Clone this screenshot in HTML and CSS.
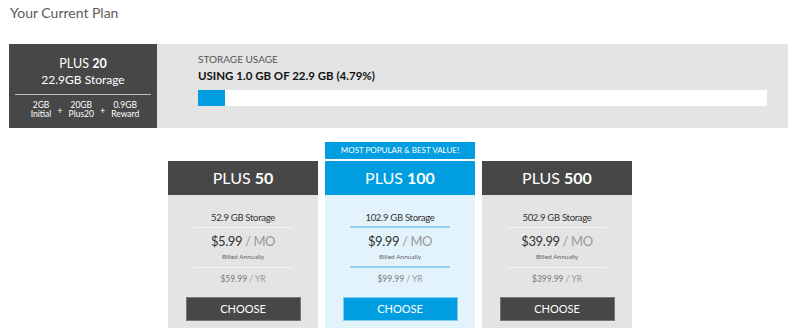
FILE: index.html
```html
<!DOCTYPE html>
<html>

	<head>
		<meta charset="UTF-8">
		<title>Your Current Plan</title>
		<link rel="stylesheet" href="styles.css">
	</head>

	<body>
		<h1 class="title">Your Current Plan</h1>

		<div class="current">
			<div class="current-plan">
				<div class="current-name">PLUS <b>20</b></div>
				<div class="current-size">22.9GB Storage</div>
				<div class="parts">
					<div class="part">2GB<br>Initial</div>
					<span class="plus">+</span>
					<div class="part">20GB<br>Plus20</div>
					<span class="plus">+</span>
					<div class="part">0.9GB<br>Reward</div>
				</div>
			</div>
			<div class="usage">
				<div class="usage-label">STORAGE USAGE</div>
				<div class="usage-text">USING 1.0 GB OF 22.9 GB (4.79%)</div>
				<div class="usage-bar"><div class="usage-fill" style="width: 4.79%"></div></div>
			</div>
		</div>

		<div class="plans">
			<div class="plan">
				<div class="plan-head">PLUS <b>50</b></div>
				<div class="plan-body">
					<div class="plan-size">52.9 GB Storage</div>
					<div class="plan-price">$5.99 <span>/ MO</span></div>
					<div class="plan-billed">Billed Annually</div>
					<div class="plan-year">$59.99 <span>/ YR</span></div>
					<a href="##" class="choose">CHOOSE</a>
				</div>
			</div>
			<div class="plan best">
				<div class="badge">MOST POPULAR &amp; BEST VALUE!</div>
				<div class="plan-head">PLUS <b>100</b></div>
				<div class="plan-body">
					<div class="plan-size">102.9 GB Storage</div>
					<div class="plan-price">$9.99 <span>/ MO</span></div>
					<div class="plan-billed">Billed Annually</div>
					<div class="plan-year">$99.99 <span>/ YR</span></div>
					<a href="##" class="choose">CHOOSE</a>
				</div>
			</div>
			<div class="plan">
				<div class="plan-head">PLUS <b>500</b></div>
				<div class="plan-body">
					<div class="plan-size">502.9 GB Storage</div>
					<div class="plan-price">$39.99 <span>/ MO</span></div>
					<div class="plan-billed">Billed Annually</div>
					<div class="plan-year">$399.99 <span>/ YR</span></div>
					<a href="##" class="choose">CHOOSE</a>
				</div>
			</div>
		</div>
	</body>

</html>
```

FILE: styles.css
```css
* {
	margin: 0;
	padding: 0;
	box-sizing: border-box;
}

body {
	font-family: Lato, "Open Sans", sans-serif;
	background: #fff;
	color: #333;
	width: 800px;
}

.title {
	font-size: 14px;
	font-weight: normal;
	color: #5e5a58;
	line-height: 20px;
	padding: 3px 0 0 10px;
}

/* current plan strip */
.current {
	display: flex;
	width: 779px;
	height: 84px;
	margin: 21px 0 0 9px;
	background: #e4e4e4;
}

.current-plan {
	width: 148px;
	background: #474747;
	color: #fff;
	text-align: center;
	padding-top: 12px;
}

.current-name {
	font-size: 12.5px;
	line-height: 16px;
}

.current-size {
	font-size: 12px;
	line-height: 16px;
	padding-bottom: 6px;
	margin: 0 6px;
	border-bottom: 1px solid #bbb;
}

.parts {
	display: flex;
	justify-content: center;
	align-items: center;
	gap: 6px;
	margin-top: 6px;
	padding-left: 4px;
	font-size: 8.5px;
	line-height: 9px;
}

.plus {
	font-size: 9px;
}

.usage {
	flex: 1;
	padding: 8px 21px 0 41px;
}

.usage-label {
	font-size: 10px;
	line-height: 14px;
	color: #555;
}

.usage-text {
	font-size: 11.5px;
	font-weight: bold;
	line-height: 14px;
	margin-top: 3px;
	color: #111;
}

.usage-bar {
	height: 16px;
	margin-top: 7px;
	background: #fff;
}

.usage-fill {
	height: 100%;
	background: #009ee0;
}

/* plan cards */
.plans {
	display: flex;
	justify-content: center;
	align-items: flex-end;
	gap: 7px;
	margin-top: 14px;
}

.plan {
	width: 150px;
	text-align: center;
}

.badge {
	height: 17px;
	line-height: 17px;
	margin-bottom: 2px;
	font-size: 8px;
	color: #fff;
	background: #009ee0;
}

.plan-head {
	height: 34px;
	line-height: 34px;
	font-size: 16px;
	color: #fff;
	background: #474747;
}

.plan-body {
	padding: 16px 0 8px;
	background: #e4e4e4;
}

.plan-size {
	width: 100px;
	height: 17px;
	margin: 0 auto;
	padding-bottom: 2px;
	font-size: 9.5px;
	line-height: 14px;
	letter-spacing: -0.3px;
	border-bottom: 1px solid #f2f2f2;
}

.plan-price {
	height: 18px;
	margin-top: 4px;
	font-size: 13px;
	line-height: 18px;
	letter-spacing: -0.4px;
	color: #333;
}

.plan-price span,
.plan-year span {
	color: #999;
}

.plan-billed {
	width: 100px;
	height: 16px;
	margin: 2px auto 0;
	padding-bottom: 5px;
	font-size: 6.5px;
	line-height: 10px;
	color: #666;
	border-bottom: 1px solid #f2f2f2;
}

.plan-year {
	height: 12px;
	margin-top: 5px;
	font-size: 8.5px;
	line-height: 12px;
	color: #777;
}

.choose {
	display: block;
	width: 113px;
	height: 22px;
	line-height: 22px;
	margin: 13px auto 0;
	font-size: 11px;
	color: #fff;
	text-decoration: none;
	background: #474747;
	box-shadow: 0 0 0 1px #777;
}

.best .plan-head,
.best .choose {
	background: #009ee0;
}

.best .choose {
	box-shadow: 0 0 0 1px #7fcdee;
}

.best .plan-body {
	background: #e2f3fb;
}

.best .plan-size,
.best .plan-billed {
	border-bottom: 2px solid #8fd4f0;
}
```
